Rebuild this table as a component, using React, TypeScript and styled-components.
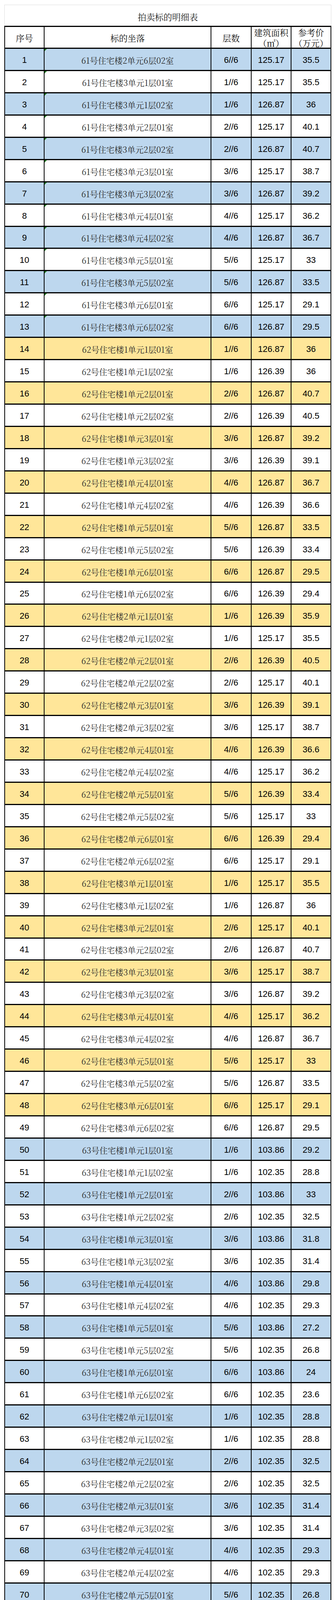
import React from "react";
import styled, { createGlobalStyle } from "styled-components";

const GlobalStyle = createGlobalStyle`
  html, body { margin: 0; padding: 0; background: #ffffff; }
  * { box-sizing: border-box; }
`;

const SERIF = `"Noto Serif CJK SC", "Liberation Serif", "Noto Sans CJK SC", serif`;
const SANS = `"Liberation Sans", Arial, "Noto Sans CJK SC", sans-serif`;

type Tone = "blue" | "yellow" | "white";

const toneColor: Record<Tone, string> = {
  blue: "#bdd7ee",
  yellow: "#ffe699",
  white: "#ffffff",
};

const Page = styled.div`
  padding: 12px 0 0 11px;
  width: 860px;
`;

const TitleBox = styled.div`
  width: 837px;
  height: 54px;
  border: 1px solid #dedede;
  border-bottom: none;
  display: flex;
  align-items: center;
  justify-content: center;
  font-family: ${SERIF};
  font-size: 22px;
  color: #1a1a1a;
  padding-top: 6px;
`;

const Sheet = styled.div`
  width: 837px;
  border-left: 2px solid #000;
  border-top: 3px solid #000;
`;

const Row = styled.div<{ $tone: Tone; $head?: boolean }>`
  display: grid;
  grid-template-columns: 101px 427px 103px 102px 102px;
  height: ${(p) => (p.$head ? "56px" : "56.95px")};
  border-bottom: 3px solid #000;
  background: ${(p) => toneColor[p.$tone]};
`;

const HeadCell = styled.div`
  border-right: 2px solid #000;
  display: flex;
  flex-direction: column;
  align-items: center;
  justify-content: center;
  font-family: ${SERIF};
  font-size: 22px;
  line-height: 27px;
  color: #111;
  text-align: center;
`;

const Cell = styled.div<{ $cjk?: boolean }>`
  position: relative;
  border-right: 2px solid #000;
  display: flex;
  align-items: center;
  justify-content: center;
  padding-top: 4px;
  font-family: ${(p) => (p.$cjk ? SERIF : SANS)};
  font-size: ${(p) => (p.$cjk ? "21px" : "22px")};
  color: ${(p) => (p.$cjk ? "#2a2a2a" : "#000")};
  white-space: nowrap;
`;

const Flag = styled.span`
  position: absolute;
  top: 0;
  left: 0;
  width: 0;
  height: 0;
  border-top: 6px solid #1e7b1e;
  border-right: 6px solid transparent;
`;

type Item = [number, number, number, string, string, string];

const raw: Item[] = [
  [61, 2, 6, "02", "125.17", "35.5"],
  [61, 3, 1, "01", "125.17", "35.5"],
  [61, 3, 1, "02", "126.87", "36"],
  [61, 3, 2, "01", "125.17", "40.1"],
  [61, 3, 2, "02", "126.87", "40.7"],
  [61, 3, 3, "01", "125.17", "38.7"],
  [61, 3, 3, "02", "126.87", "39.2"],
  [61, 3, 4, "01", "125.17", "36.2"],
  [61, 3, 4, "02", "126.87", "36.7"],
  [61, 3, 5, "01", "125.17", "33"],
  [61, 3, 5, "02", "126.87", "33.5"],
  [61, 3, 6, "01", "125.17", "29.1"],
  [61, 3, 6, "02", "126.87", "29.5"],
  [62, 1, 1, "01", "126.87", "36"],
  [62, 1, 1, "02", "126.39", "36"],
  [62, 1, 2, "01", "126.87", "40.7"],
  [62, 1, 2, "02", "126.39", "40.5"],
  [62, 1, 3, "01", "126.87", "39.2"],
  [62, 1, 3, "02", "126.39", "39.1"],
  [62, 1, 4, "01", "126.87", "36.7"],
  [62, 1, 4, "02", "126.39", "36.6"],
  [62, 1, 5, "01", "126.87", "33.5"],
  [62, 1, 5, "02", "126.39", "33.4"],
  [62, 1, 6, "01", "126.87", "29.5"],
  [62, 1, 6, "02", "126.39", "29.4"],
  [62, 2, 1, "01", "126.39", "35.9"],
  [62, 2, 1, "02", "125.17", "35.5"],
  [62, 2, 2, "01", "126.39", "40.5"],
  [62, 2, 2, "02", "125.17", "40.1"],
  [62, 2, 3, "01", "126.39", "39.1"],
  [62, 2, 3, "02", "125.17", "38.7"],
  [62, 2, 4, "01", "126.39", "36.6"],
  [62, 2, 4, "02", "125.17", "36.2"],
  [62, 2, 5, "01", "126.39", "33.4"],
  [62, 2, 5, "02", "125.17", "33"],
  [62, 2, 6, "01", "126.39", "29.4"],
  [62, 2, 6, "02", "125.17", "29.1"],
  [62, 3, 1, "01", "125.17", "35.5"],
  [62, 3, 1, "02", "126.87", "36"],
  [62, 3, 2, "01", "125.17", "40.1"],
  [62, 3, 2, "02", "126.87", "40.7"],
  [62, 3, 3, "01", "125.17", "38.7"],
  [62, 3, 3, "02", "126.87", "39.2"],
  [62, 3, 4, "01", "125.17", "36.2"],
  [62, 3, 4, "02", "126.87", "36.7"],
  [62, 3, 5, "01", "125.17", "33"],
  [62, 3, 5, "02", "126.87", "33.5"],
  [62, 3, 6, "01", "125.17", "29.1"],
  [62, 3, 6, "02", "126.87", "29.5"],
  [63, 1, 1, "01", "103.86", "29.2"],
  [63, 1, 1, "02", "102.35", "28.8"],
  [63, 1, 2, "01", "103.86", "33"],
  [63, 1, 2, "02", "102.35", "32.5"],
  [63, 1, 3, "01", "103.86", "31.8"],
  [63, 1, 3, "02", "102.35", "31.4"],
  [63, 1, 4, "01", "103.86", "29.8"],
  [63, 1, 4, "02", "102.35", "29.3"],
  [63, 1, 5, "01", "103.86", "27.2"],
  [63, 1, 5, "02", "102.35", "26.8"],
  [63, 1, 6, "01", "103.86", "24"],
  [63, 1, 6, "02", "102.35", "23.6"],
  [63, 2, 1, "01", "102.35", "28.8"],
  [63, 2, 1, "02", "102.35", "28.8"],
  [63, 2, 2, "01", "102.35", "32.5"],
  [63, 2, 2, "02", "102.35", "32.5"],
  [63, 2, 3, "01", "102.35", "31.4"],
  [63, 2, 3, "02", "102.35", "31.4"],
  [63, 2, 4, "01", "102.35", "29.3"],
  [63, 2, 4, "02", "102.35", "29.3"],
  [63, 2, 5, "01", "102.35", "26.8"],
  [63, 2, 5, "02", "102.35", "26.8"],
  [63, 2, 6, "01", "102.35", "23.6"],
  [63, 2, 6, "02", "102.35", "23.6"],
  [63, 3, 1, "01", "102.35", "28.8"],
  [63, 3, 1, "02", "103.86", "29.2"],
  [63, 3, 2, "01", "102.35", "32.5"],
  [63, 3, 2, "02", "103.86", "33"],
  [63, 3, 3, "01", "102.35", "31.4"],
  [63, 3, 3, "02", "103.86", "31.8"],
  [63, 3, 4, "01", "102.35", "29.3"],
  [63, 3, 4, "02", "103.86", "29.8"],
  [63, 3, 5, "01", "102.35", "26.8"],
  [63, 3, 5, "02", "103.86", "27.2"],
  [63, 3, 6, "01", "102.35", "23.6"],
  [63, 3, 6, "02", "103.86", "24"],
];

function toneFor(n: number): Tone {
  if (n <= 13) return n % 2 === 1 ? "blue" : "white";
  if (n <= 49) return n % 2 === 0 ? "yellow" : "white";
  return n % 2 === 0 ? "blue" : "white";
}

export default function App() {
  return (
    <>
      <GlobalStyle />
      <Page>
        <TitleBox>拍卖标的明细表</TitleBox>
        <Sheet>
          <Row $tone="white" $head>
            <HeadCell>序号</HeadCell>
            <HeadCell>标的坐落</HeadCell>
            <HeadCell>层数</HeadCell>
            <HeadCell>
              <span>建筑面积</span>
              <span>（㎡）</span>
            </HeadCell>
            <HeadCell>
              <span>参考价</span>
              <span>（万元）</span>
            </HeadCell>
          </Row>
          {raw.map(([b, u, f, r, area, price], i) => {
            const n = i + 1;
            return (
              <Row key={n} $tone={toneFor(n)}>
                <Cell>{n}</Cell>
                <Cell $cjk>
                  {n <= 13 && <Flag />}
                  {`${b}号住宅楼${u}单元${f}层${r}室`}
                </Cell>
                <Cell>{`${f}//6`}</Cell>
                <Cell>{area}</Cell>
                <Cell>{price}</Cell>
              </Row>
            );
          })}
        </Sheet>
      </Page>
    </>
  );
}
